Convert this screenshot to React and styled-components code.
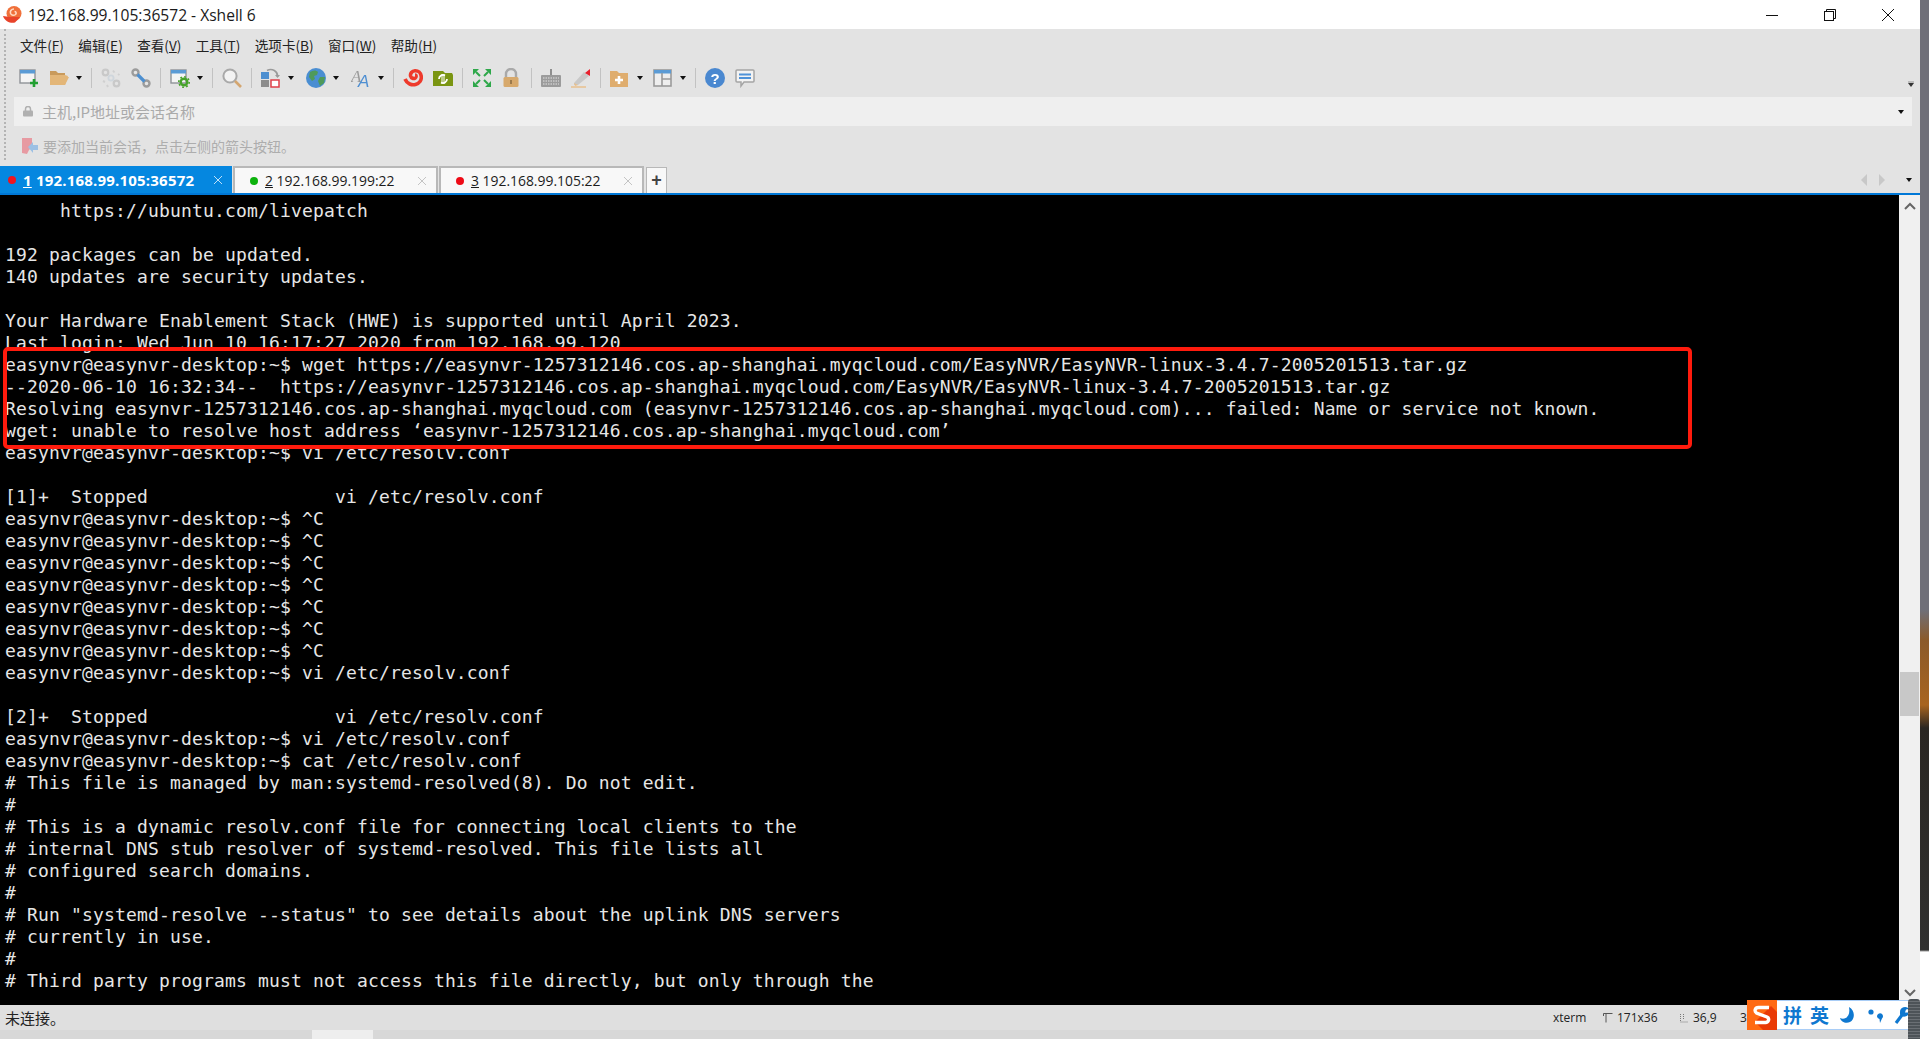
import React from 'react';
import styled, { createGlobalStyle } from 'styled-components';

const GlobalStyle = createGlobalStyle`
  html, body { margin: 0; padding: 0; background: #fff; overflow: hidden; }
`;

const UI_FONT = `"Open Sans", "Noto Sans CJK SC", sans-serif`;
const CJK_FONT = `"Noto Sans CJK SC", "Open Sans", sans-serif`;

const Page = styled.div`
  position: relative;
  display: flex;
  width: 1929px;
  height: 1039px;
  overflow: hidden;
`;

const AppWindow = styled.div`
  display: flex;
  flex-direction: column;
  width: 1920px;
  height: 100%;
  background: #e3e3e3;
`;

const DesktopStrip = styled.div`
  width: 9px;
  height: 100%;
  background: linear-gradient(
    to bottom,
    #6f6f78 0,
    #6f6f78 610px,
    #8b5a2a 640px,
    #a8641f 705px,
    #2a2622 728px,
    #30302f 950px,
    #ffffff 952px
  );
`;

const TitleBar = styled.div`
  display: flex;
  align-items: center;
  height: 29px;
  flex: none;
  background: #fff;
  padding-left: 2px;
`;

const TitleText = styled.span`
  margin-left: 6px;
  font: 15.6px ${UI_FONT};
  color: #1a1a1a;
`;

const WindowButtons = styled.div`
  display: flex;
  margin-left: auto;
  padding-right: 3px;
`;

const WindowButton = styled.div`
  display: flex;
  align-items: center;
  justify-content: center;
  width: 58px;
  height: 29px;
`;

const ToolArea = styled.div`
  display: flex;
  flex: none;
  height: 137px;
  padding-left: 4px;
`;

const Grip = styled.div`
  width: 0;
  height: 131px;
  border-left: 2px dotted #b4b4b4;
`;

const ToolRows = styled.div`
  display: flex;
  flex-direction: column;
  flex: 1;
  min-width: 0;
`;

const MenuBar = styled.div`
  display: flex;
  align-items: center;
  gap: 14.4px;
  height: 32px;
  padding-left: 14px;
`;

const MenuItem = styled.span`
  font: 13.6px ${CJK_FONT};
  color: #222;
  u { text-underline-offset: 1px; }
`;

const Toolbar = styled.div`
  display: flex;
  align-items: center;
  gap: 10px;
  height: 34px;
  margin-bottom: 2px;
  padding-left: 13px;
  padding-right: 6px;
`;

const ToolIcon = styled.svg`
  width: 20px;
  height: 20px;
  flex: none;
  filter: blur(0.3px);
`;

const Caret = styled.span`
  width: 0;
  height: 0;
  flex: none;
  margin-left: -3px;
  margin-right: ${(p) => (p.$spaced ? 2 : 0)}px;
  border-left: 3.5px solid transparent;
  border-right: 3.5px solid transparent;
  border-top: 4px solid #111;
`;

const Separator = styled.span`
  width: 1px;
  height: 20px;
  flex: none;
  margin: 0 -1px;
  background: #c2c2c2;
`;

const OverflowCaret = styled(Caret)`
  margin-left: auto;
  margin-top: 14px;
  border-top-color: #333;
  box-shadow: 0 -2px 0 #bbb;
`;

const AddressBar = styled.div`
  display: flex;
  align-items: center;
  height: 29px;
  flex: none;
  margin: 0 8px 0 8px;
  padding: 0 9px 0 9px;
  background: #efefef;
`;

const AddressText = styled.span`
  margin-left: 9px;
  font: 15px ${CJK_FONT};
  color: #aaaaaa;
`;

const AddressCaret = styled(Caret)`
  margin-left: auto;
  margin-right: -1px;
`;

const LinkBar = styled.div`
  display: flex;
  align-items: center;
  height: 40px;
  padding-left: 16px;
`;

const LinkText = styled.span`
  margin-left: 4px;
  font: 14px ${CJK_FONT};
  color: #adadad;
`;

const TabStrip = styled.div`
  display: flex;
  align-items: flex-end;
  flex: none;
  height: 29px;
  border-bottom: 2px solid #0078d7;
  box-sizing: border-box;
`;

const Tab = styled.div`
  display: flex;
  align-items: center;
  box-sizing: border-box;
  width: ${(p) => p.$width}px;
  height: 27px;
  margin-right: 1px;
  padding: 0 9px 0 ${(p) => (p.$active ? 8 : 15)}px;
  font: ${(p) => (p.$active ? 700 : 400)} ${(p) => (p.$active ? 15 : 13.9)}px ${UI_FONT};
  letter-spacing: ${(p) => (p.$active ? 0.2 : 0)}px;
  color: ${(p) => (p.$active ? '#fff' : '#1c1c1c')};
  background: ${(p) => (p.$active ? '#0587e0' : '#f8f8f8')};
  border: ${(p) => (p.$active ? 'none' : '2px solid #b8b8b8')};
  border-bottom: none;
`;

const Dot = styled.span`
  width: 8px;
  height: 8px;
  flex: none;
  margin-right: 7px;
  border-radius: 50%;
  background: ${(p) => p.$color};
`;

const TabLabel = styled.span`
  white-space: pre;
`;

const TabClose = styled.svg`
  width: 10px;
  height: 10px;
  margin-left: auto;
`;

const AddTab = styled.div`
  display: flex;
  align-items: center;
  justify-content: center;
  box-sizing: border-box;
  width: 21px;
  height: 26px;
  margin-left: 1px;
  background: #f8f8f8;
  border: 1px solid #b8b8b8;
  border-bottom: none;
  font: 700 18px "Liberation Sans", sans-serif;
  color: #444;
`;

const TabNav = styled.div`
  display: flex;
  align-items: center;
  gap: 12px;
  margin-left: auto;
  padding-right: 8px;
  height: 27px;
`;

const NavArrow = styled.span`
  width: 0;
  height: 0;
  border-top: 6px solid transparent;
  border-bottom: 6px solid transparent;
  ${(p) => (p.$left ? 'border-right: 6px solid #c8c8c8;' : 'border-left: 6px solid #c8c8c8;')}
`;

const TabNavCaret = styled(Caret)`
  margin-left: 9px;
`;

const Main = styled.div`
  display: flex;
  flex: none;
  height: 810px;
`;

const Terminal = styled.div`
  position: relative;
  flex: 1;
  box-sizing: border-box;
  padding: 5px 0 0 5px;
  overflow: hidden;
  background: #000;
  color: #e6e6e6;
  font: 18px/22px "DejaVu Sans Mono", "Liberation Mono", monospace;
  letter-spacing: 0.16px;
  white-space: pre;
`;

const TermLine = styled.div`
  height: 22px;
`;

const Highlight = styled.div`
  position: absolute;
  left: 3px;
  top: 152px;
  box-sizing: border-box;
  width: 1689px;
  height: 102px;
  border: 4px solid #ff1b0d;
  border-radius: 5px;
`;

const Scrollbar = styled.div`
  display: flex;
  flex-direction: column;
  align-items: center;
  width: 21px;
  flex: none;
  background: #f0f0f0;
`;

const ScrollButton = styled.svg`
  width: 12px;
  height: 8px;
  flex: none;
  margin-top: ${(p) => (p.$down ? 'auto' : '7px')};
  margin-bottom: ${(p) => (p.$down ? '8px' : '0')};
`;

const ScrollThumb = styled.div`
  width: 19px;
  height: 44px;
  flex: none;
  margin-top: 462px;
  background: #c8c8c8;
`;

const StatusBar = styled.div`
  display: flex;
  align-items: center;
  flex: none;
  height: 25px;
  background: #dfdfdf;
  padding-left: 5px;
  font: 12px ${UI_FONT};
  color: #222;
`;

const StatusMessage = styled.span`
  font: 15px ${CJK_FONT};
`;

const StatusItems = styled.div`
  display: flex;
  align-items: center;
  margin-left: auto;
`;

const StatusItem = styled.div`
  display: flex;
  align-items: center;
  gap: 4px;
  width: ${(p) => p.$width}px;
`;

const BottomStrip = styled.div`
  display: flex;
  flex: 1;
  padding-left: 312px;
  background: #d8d8d8;
`;

const BottomThumb = styled.div`
  width: 61px;
  background: #eeeeee;
`;

const ImeBar = styled.div`
  position: absolute;
  left: 1747px;
  top: 1000px;
  display: flex;
  align-items: center;
  box-sizing: border-box;
  width: 165px;
  height: 30px;
  padding-right: 4px;
  background: #fff;
  border: 1px solid #a9cdf6;
  border-left: none;
`;

const ImeLogo = styled.svg`
  width: 30px;
  height: 30px;
  flex: none;
`;

const ImeLabel = styled.span`
  margin-left: ${(p) => p.$gap}px;
  font: 700 19px/28px ${CJK_FONT};
  color: #0f78d0;
`;

const ImeGlyph = styled.svg`
  width: 16px;
  height: 18px;
  flex: none;
  margin-left: ${(p) => p.$gap}px;
`;

const ImeHandle = styled.div`
  position: absolute;
  left: 1908px;
  top: 999px;
  width: 12px;
  height: 40px;
  border-radius: 3px 3px 0 0;
  background: repeating-linear-gradient(to bottom, #4d5358 0, #4d5358 2px, #6a6f74 2px, #6a6f74 3px);
`;

const spiral = 'M2 11C4 16 9 17.5 12.5 16.5C16.5 15.3 18.5 12 18.3 8.8C18 4.8 15 2.6 12 2.8C9 3 7 5.4 7.6 8C8.2 10.3 10.6 11 12.2 9.9C13.6 8.9 13.3 7 12 7';

const icons = {
  newTab: (
    <>
      <rect x="1" y="2" width="15" height="13" fill="#f4f4f4" stroke="#8f9398" strokeWidth="1.4" />
      <rect x="1" y="2" width="15" height="3.5" fill="#5b9bd5" />
      <path d="M15 11v8M11 15h8" stroke="#22a032" strokeWidth="2.6" />
    </>
  ),
  folder: (
    <>
      <path d="M1 3h6l2 2h7v3H1z" fill="#c99a5b" />
      <path d="M1 17V7h15l3 1-3 9z" fill="#e3b678" />
      <path d="M4 9h16l-4 8H1z" fill="#e3b678" />
    </>
  ),
  linkOff: (
    <>
      <circle cx="4.5" cy="4.500" r="2.800" fill="none" stroke="#c9c9c9" strokeWidth="2.200" />
      <circle cx="15.5" cy="15.500" r="2.800" fill="none" stroke="#c9c9c9" strokeWidth="2.200" />
      <path d="M12 2.500l1.500 2M17 6l1.500 1M2 13l2 1M6 17l1 2" stroke="#d0d0d0" strokeWidth="2" />
      <circle cx="10" cy="10" r="2.600" fill="none" stroke="#cfd6dc" strokeWidth="1.800" />
    </>
  ),
  link: (
    <>
      <circle cx="4.500" cy="4.500" r="3" fill="#e6e6e6" stroke="#9c9c9c" strokeWidth="2.400" />
      <circle cx="15.500" cy="15.500" r="3" fill="#e6e6e6" stroke="#9c9c9c" strokeWidth="2.400" />
      <path d="M6.500 6.500l7 7" stroke="#4d8fd0" strokeWidth="3.200" />
    </>
  ),
  settings: (
    <>
      <rect x="1" y="2" width="15" height="13" fill="#f4f4f4" stroke="#8f9398" strokeWidth="1.4" />
      <rect x="1" y="2" width="15" height="3.5" fill="#5b9bd5" />
      <circle cx="14" cy="14" r="3.3" fill="none" stroke="#46a32a" strokeWidth="2.4" />
      <circle cx="14" cy="14" r="5.2" fill="none" stroke="#46a32a" strokeWidth="1.6" strokeDasharray="1.8 2.2" />
    </>
  ),
  search: (
    <>
      <circle cx="8" cy="8" r="6.6" fill="#f3f3f3" stroke="#a9a9a9" strokeWidth="2" />
      <path d="M13 13l6 6" stroke="#d4a670" strokeWidth="2.6" />
    </>
  ),
  transfer: (
    <>
      <rect x="0" y="4" width="8" height="7" fill="#4d8fd0" />
      <rect x="0" y="12" width="8" height="7" fill="#8c8c8c" />
      <rect x="10" y="12" width="8" height="7" fill="#fff" stroke="#e0404a" strokeWidth="1.5" />
      <path d="M6 2.5C11 0 17 3 16.5 9" fill="none" stroke="#9a9a9a" strokeWidth="1.6" />
      <path d="M14 7h5l-2.500 3z" fill="#9a9a9a" />
    </>
  ),
  globe: (
    <>
      <circle cx="10" cy="10" r="10" fill="#4a8ed2" />
      <path d="M4 4c3-2 6-2 8 0l-1 3-3 1 1 3-3 2-3-4zM14 9l5 0-1 6-4 3-2-5z" fill="#4f9a5a" />
    </>
  ),
  font: (
    <>
      <text x="0" y="14" fontFamily="Liberation Serif" fontStyle="italic" fontSize="17" fill="#9a9a9a">A</text>
      <text x="7" y="19" fontFamily="Liberation Sans" fontStyle="italic" fontSize="17" fill="#4f8fd2">A</text>
    </>
  ),
  logo: (
    <path d={spiral} fill="none" stroke="#ee3a2c" strokeWidth="3.6" />
  ),
  xftp: (
    <>
      <path d="M0 3h10l2 2h7l1 2v11H0z" fill="#7a9512" />
      <path d="M6 11a4 4 0 0 1 6-3.500M14 11a4 4 0 0 1-6 3.500" fill="none" stroke="#fff" strokeWidth="1.8" />
      <path d="M9 6v10M11 6v10" stroke="#fff" strokeWidth="1" />
    </>
  ),
  expand: (
    <>
      <path d="M1 1h6L1 7zM19 1h-6l6 6zM1 19h6l-6-6zM19 19h-6l6-6z" fill="#2ea84a" />
      <path d="M4 4l4 4M16 4l-4 4M4 16l4-4M16 16l-4-4" stroke="#2ea84a" strokeWidth="2" />
    </>
  ),
  lock: (
    <>
      <path d="M4 10V6a5 5 0 0 1 10 0v4" fill="none" stroke="#a9a9a9" strokeWidth="2.4" />
      <rect x="1.500" y="9" width="15" height="10" rx="1.500" fill="#d7a96c" />
      <rect x="8" y="12" width="2" height="4" fill="#9c7a4c" />
    </>
  ),
  keyboard: (
    <>
      <path d="M10 1v6" stroke="#8f8f8f" strokeWidth="2" />
      <rect x="0" y="7" width="20" height="12" rx="1" fill="#9b9b9b" />
      <path d="M2 10h16M2 13h16M2 16h16" stroke="#e3e3e3" strokeWidth="1" strokeDasharray="1.500 1" />
    </>
  ),
  pen: (
    <>
      <path d="M3 15L13 4l5 4-11 9-4 0z" fill="#c9c9c9" />
      <path d="M14 5l5-4 0 7z" fill="#e8212e" />
      <path d="M3 15l4 2-3 1z" fill="#e9c08b" />
      <path d="M0 19h15" stroke="#e9b878" strokeWidth="1.2" />
    </>
  ),
  folderAdd: (
    <>
      <path d="M0 3h7l2 2h9v14H0z" fill="#dfad6e" />
      <path d="M9 8v8M5 12h8" stroke="#fff" strokeWidth="2.6" />
    </>
  ),
  layout: (
    <>
      <rect x="1" y="2" width="17" height="16" fill="#eeeeee" stroke="#9a9a9a" strokeWidth="1.6" />
      <rect x="1" y="2" width="17" height="3.500" fill="#5b9bd5" />
      <path d="M9 5v13M9 11h9" stroke="#9a9a9a" strokeWidth="1.6" />
    </>
  ),
  help: (
    <>
      <circle cx="10" cy="10" r="10" fill="#4a88d0" />
      <text x="10" y="15.500" textAnchor="middle" fontFamily="Liberation Sans" fontWeight="700" fontSize="15" fill="#fff">?</text>
    </>
  ),
  chat: (
    <>
      <path d="M2 2h16a1 1 0 0 1 1 1v10a1 1 0 0 1-1 1H9l-3 4v-4H2a1 1 0 0 1-1-1V3a1 1 0 0 1 1-1z" fill="#f3f3f3" stroke="#a5a5a5" strokeWidth="1.500" />
      <path d="M4 6.500h12M4 10h12" stroke="#4f92d8" strokeWidth="2" />
    </>
  ),
};

const toolbarItems = [
  'newTab', 'folder', 'caret', 'sep', 'linkOff', 'link', 'sep', 'settings', 'caret', 'sep',
  'search', 'sep', 'transfer', 'caretWide', 'globe', 'caretWide', 'font', 'caret', 'sep', 'logo', 'xftp', 'sep',
  'expand', 'lock', 'sep', 'keyboard', 'pen', 'sep', 'folderAdd', 'caret', 'layout', 'caret', 'sep', 'help', 'chat',
];

const menus = [
  ['文件', 'F'], ['编辑', 'E'], ['查看', 'V'], ['工具', 'T'], ['选项卡', 'B'], ['窗口', 'W'], ['帮助', 'H'],
];

const tabs = [
  { num: '1', label: '192.168.99.105:36572', color: '#f0141e', width: 232, active: true, x: '#bfe0f7' },
  { num: '2', label: '192.168.99.199:22', color: '#0cb20c', width: 205, x: '#c4c4c4' },
  { num: '3', label: '192.168.99.105:22', color: '#ee0a16', width: 205, x: '#c4c4c4' },
];

const prompt = 'easynvr@easynvr-desktop:~$ ';

const lines = [
  '     https://ubuntu.com/livepatch',
  '',
  '192 packages can be updated.',
  '140 updates are security updates.',
  '',
  'Your Hardware Enablement Stack (HWE) is supported until April 2023.',
  'Last login: Wed Jun 10 16:17:27 2020 from 192.168.99.120',
  prompt + 'wget https://easynvr-1257312146.cos.ap-shanghai.myqcloud.com/EasyNVR/EasyNVR-linux-3.4.7-2005201513.tar.gz',
  '--2020-06-10 16:32:34--  https://easynvr-1257312146.cos.ap-shanghai.myqcloud.com/EasyNVR/EasyNVR-linux-3.4.7-2005201513.tar.gz',
  'Resolving easynvr-1257312146.cos.ap-shanghai.myqcloud.com (easynvr-1257312146.cos.ap-shanghai.myqcloud.com)... failed: Name or service not known.',
  'wget: unable to resolve host address ‘easynvr-1257312146.cos.ap-shanghai.myqcloud.com’',
  prompt + 'vi /etc/resolv.conf',
  '',
  '[1]+  Stopped                 vi /etc/resolv.conf',
  prompt + '^C',
  prompt + '^C',
  prompt + '^C',
  prompt + '^C',
  prompt + '^C',
  prompt + '^C',
  prompt + '^C',
  prompt + 'vi /etc/resolv.conf',
  '',
  '[2]+  Stopped                 vi /etc/resolv.conf',
  prompt + 'vi /etc/resolv.conf',
  prompt + 'cat /etc/resolv.conf',
  '# This file is managed by man:systemd-resolved(8). Do not edit.',
  '#',
  '# This is a dynamic resolv.conf file for connecting local clients to the',
  '# internal DNS stub resolver of systemd-resolved. This file lists all',
  '# configured search domains.',
  '#',
  '# Run "systemd-resolve --status" to see details about the uplink DNS servers',
  '# currently in use.',
  '#',
  '# Third party programs must not access this file directly, but only through the',
];

const TitleLogo = () => (
  <ToolIcon viewBox="0 0 20 20">
    <circle cx="12" cy="8.500" r="7.500" fill="#f0703a" />
    <path d="M1 11C3 17 9 18.500 13 17.500L18 12 8 12z" fill="#e8432a" />
    <path d="M12 4C9 4 7.800 6.500 8.600 8.500C9.500 10.500 12 10.800 13.500 9.500C14.800 8 14 6.500 12.500 6.500" fill="none" stroke="#ffd9c2" strokeWidth="1.600" />
  </ToolIcon>
);

const App = () => {
  return (
    <Page>
      <GlobalStyle />
      <AppWindow>
        <TitleBar>
          <TitleLogo />
          <TitleText>192.168.99.105:36572 - Xshell 6</TitleText>
          <WindowButtons>
            <WindowButton>
              <svg width="12" height="12" viewBox="0 0 12 12"><path d="M0 6.500h12" stroke="#111" strokeWidth="1" /></svg>
            </WindowButton>
            <WindowButton>
              <svg width="12" height="12" viewBox="0 0 12 12" fill="none" stroke="#111"><rect x="0.500" y="2.500" width="9" height="9" /><path d="M2.500 2.500v-2h9v9h-2" /></svg>
            </WindowButton>
            <WindowButton>
              <svg width="12" height="12" viewBox="0 0 12 12"><path d="M0 0l12 12M12 0L0 12" stroke="#111" strokeWidth="1" /></svg>
            </WindowButton>
          </WindowButtons>
        </TitleBar>

        <ToolArea>
          <Grip />
          <ToolRows>
            <MenuBar>
              {menus.map(([name, key]) => (
                <MenuItem key={key}>{name}(<u>{key}</u>)</MenuItem>
              ))}
            </MenuBar>
            <Toolbar>
              {toolbarItems.map((item, i) => {
                if (item === 'caret') return <Caret key={i} />;
                if (item === 'caretWide') return <Caret key={i} $spaced />;
                if (item === 'sep') return <Separator key={i} />;
                return <ToolIcon key={i} viewBox="0 0 20 20">{icons[item]}</ToolIcon>;
              })}
              <OverflowCaret />
            </Toolbar>
            <AddressBar>
              <svg width="10" height="11" viewBox="0 0 10 11">
                <path d="M2.500 5V3a2.500 2.500 0 0 1 5 0v2" fill="none" stroke="#b0b0b0" strokeWidth="1.500" />
                <rect x="0" y="4.500" width="10" height="6" rx="1" fill="#b0b0b0" />
              </svg>
              <AddressText>主机,IP地址或会话名称</AddressText>
              <AddressCaret />
            </AddressBar>
            <LinkBar>
              <svg width="17" height="17" viewBox="0 0 17 17">
                <path d="M0 0h10v9l-3 3-2 4-5-1z" fill="#e79aa2" />
                <path d="M6 9l5-5v3h5v5h-5v3z" fill="#9cc0e4" />
              </svg>
              <LinkText>要添加当前会话，点击左侧的箭头按钮。</LinkText>
            </LinkBar>
          </ToolRows>
        </ToolArea>

        <TabStrip>
          {tabs.map((t) => (
            <Tab key={t.num} $width={t.width} $active={t.active}>
              <Dot $color={t.color} />
              <TabLabel><u>{t.num}</u> {t.label}</TabLabel>
              <TabClose viewBox="0 0 10 10">
                <path d="M1 1l8 8M9 1L1 9" stroke={t.x} strokeWidth="1" />
              </TabClose>
            </Tab>
          ))}
          <AddTab>+</AddTab>
          <TabNav>
            <NavArrow $left />
            <NavArrow />
            <TabNavCaret />
          </TabNav>
        </TabStrip>

        <Main>
          <Terminal>
            {lines.map((line, i) => (
              <TermLine key={i}>{line}</TermLine>
            ))}
            <Highlight />
          </Terminal>
          <Scrollbar>
            <ScrollButton viewBox="0 0 12 8">
              <path d="M1 7l5-5 5 5" fill="none" stroke="#666" strokeWidth="2" />
            </ScrollButton>
            <ScrollThumb />
            <ScrollButton $down viewBox="0 0 12 8">
              <path d="M1 1l5 5 5-5" fill="none" stroke="#666" strokeWidth="2" />
            </ScrollButton>
          </Scrollbar>
        </Main>

        <StatusBar>
          <StatusMessage>未连接。</StatusMessage>
          <StatusItems>
            <StatusItem $width={50}>xterm</StatusItem>
            <StatusItem $width={77}>
              <svg width="10" height="10" viewBox="0 0 10 10" fill="none" stroke="#555"><path d="M0.500 3V0.500H9.500M3 0.500V9.500" /></svg>
              171x36
            </StatusItem>
            <StatusItem $width={60}>
              <svg width="9" height="10" viewBox="0 0 9 10" fill="none" stroke="#777" strokeDasharray="1 1"><path d="M0.500 1v8h8M3.500 1v6" /></svg>
              36,9
            </StatusItem>
            <StatusItem $width={180}>3</StatusItem>
          </StatusItems>
        </StatusBar>
        <BottomStrip>
          <BottomThumb />
        </BottomStrip>
      </AppWindow>
      <DesktopStrip />

      <ImeBar>
        <ImeLogo viewBox="0 0 30 30">
          <rect width="30" height="30" fill="#ff6a13" />
          <path d="M8 22l8 8h14V12l-6-6z" fill="#e93a06" />
          <path d="M22 7.500H11.500C8 7.500 7 11 9.500 13L20 17C23 18.500 21.500 22.500 18.500 22.500H8" fill="none" stroke="#fff" strokeWidth="3.400" />
        </ImeLogo>
        <ImeLabel $gap={6}>拼</ImeLabel>
        <ImeLabel $gap={8}>英</ImeLabel>
        <ImeGlyph $gap={11} viewBox="0 0 16 18">
          <path d="M9 1C15 4 15.500 13 10 16C6 18 1 16 0 12C4 14 11 12 9 1z" fill="#0f78d0" />
        </ImeGlyph>
        <ImeGlyph $gap={12} viewBox="0 0 16 18">
          <circle cx="3" cy="6" r="2.600" fill="#0f78d0" />
          <path d="M9 10a3 3 0 1 1 5 2.500L12 17l-.5-4A3 3 0 0 1 9 10z" fill="#0f78d0" />
        </ImeGlyph>
        <ImeGlyph $gap={10} viewBox="0 0 16 18">
          <path d="M2 17L8 9" stroke="#0f78d0" strokeWidth="3.200" />
          <path d="M6 6a5 5 0 0 1 9-3l-3 .500-1 3 4 0a5 5 0 0 1-9 2z" fill="#0f78d0" />
        </ImeGlyph>
      </ImeBar>
      <ImeHandle />
    </Page>
  );
};

export default App;
